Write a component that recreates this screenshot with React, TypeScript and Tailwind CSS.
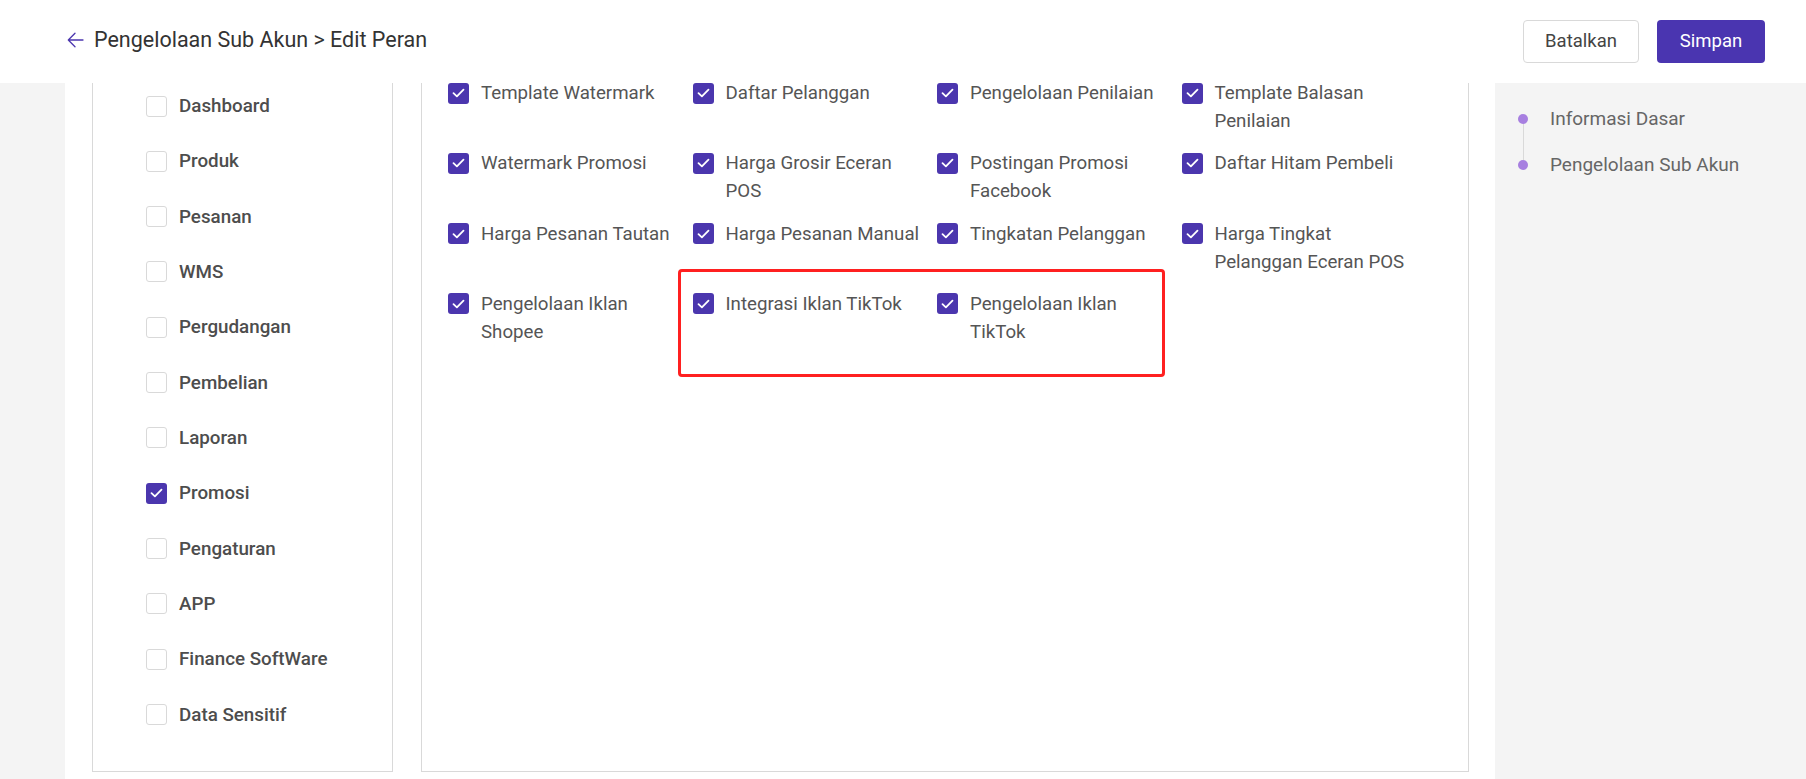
import React from 'react';

const leftItems: { label: string; checked: boolean }[] = [
  { label: 'Dashboard', checked: false },
  { label: 'Produk', checked: false },
  { label: 'Pesanan', checked: false },
  { label: 'WMS', checked: false },
  { label: 'Pergudangan', checked: false },
  { label: 'Pembelian', checked: false },
  { label: 'Laporan', checked: false },
  { label: 'Promosi', checked: true },
  { label: 'Pengaturan', checked: false },
  { label: 'APP', checked: false },
  { label: 'Finance SoftWare', checked: false },
  { label: 'Data Sensitif', checked: false },
];

const permissions = [
  'Template Watermark',
  'Daftar Pelanggan',
  'Pengelolaan Penilaian',
  'Template Balasan Penilaian',
  'Watermark Promosi',
  'Harga Grosir Eceran POS',
  'Postingan Promosi Facebook',
  'Daftar Hitam Pembeli',
  'Harga Pesanan Tautan',
  'Harga Pesanan Manual',
  'Tingkatan Pelanggan',
  'Harga Tingkat Pelanggan Eceran POS',
  'Pengelolaan Iklan Shopee',
  'Integrasi Iklan TikTok',
  'Pengelolaan Iklan TikTok',
];

const Checkbox: React.FC<{ checked: boolean }> = ({ checked }) =>
  checked ? (
    <span className="flex h-[21px] w-[21px] shrink-0 items-center justify-center rounded-[3px] bg-[#4b36ae]">
      <svg width="13" height="10" viewBox="0 0 13 10" fill="none">
        <path d="M1.5 5.2 L4.9 8.4 L11.5 1.6" stroke="white" strokeWidth="1.8" strokeLinecap="round" strokeLinejoin="round" />
      </svg>
    </span>
  ) : (
    <span className="block h-[21px] w-[21px] shrink-0 rounded-[3px] border border-[#d9d9d9] bg-white" />
  );

export default function App() {
  return (
    <div className="flex h-[779px] w-full flex-col overflow-hidden bg-white font-['Roboto',sans-serif]">
      {/* header */}
      <div className="flex h-[83px] shrink-0 items-center justify-between bg-white pl-[67px] pr-[41px]">
        <div className="flex items-center gap-[10px] pb-[3px]">
          <svg width="17" height="16" viewBox="0 0 17 16" fill="none">
            <path d="M16 8H1.5 M8 1.2 L1.3 8 L8 14.8" stroke="#4b36ae" strokeWidth="1.3" strokeLinecap="round" strokeLinejoin="round" />
          </svg>
          <span className="text-[21.5px] text-[#333]">Pengelolaan Sub Akun &gt; Edit Peran</span>
        </div>
        <div className="flex items-center gap-[18px]">
          <button className="h-[43px] w-[116px] rounded-[4px] border border-[#d9d9d9] bg-white text-[18.5px] text-[#444]">
            Batalkan
          </button>
          <button className="h-[43px] w-[108px] rounded-[4px] bg-[#4a35b0] text-[18.5px] text-white">
            Simpan
          </button>
        </div>
      </div>

      <div className="flex min-h-0 flex-1">
        <div className="w-[65px] shrink-0 bg-[#f4f4f4]" />

        {/* main */}
        <div className="flex min-w-0 flex-1 gap-[28px] bg-white pb-[7px] pl-[27px]">
          {/* left panel */}
          <div className="w-[301px] shrink-0 border-x border-b border-[#d9d9d9] pl-[53px] pt-[9px]">
            <div className="flex flex-col gap-[27.33px]">
              {leftItems.map((it) => (
                <div key={it.label} className="flex h-[28px] items-center gap-[12px]">
                  <Checkbox checked={it.checked} />
                  <span className="text-[18.8px] font-medium text-[#4d4d4d]">{it.label}</span>
                </div>
              ))}
            </div>
          </div>

          {/* permissions panel */}
          <div className="relative w-[1048px] shrink-0 border-x border-b border-[#d9d9d9] pl-[26px]">
            <div className="mt-[-4px] grid grid-cols-[repeat(4,244.5px)] gap-y-[14.3px]">
              {permissions.map((p) => (
                <div key={p} className="flex items-start gap-[12px]">
                  <span className="mt-[3.5px]">
                    <Checkbox checked />
                  </span>
                  <span className="w-[198px] text-[18.7px] leading-[28px] text-[#555]">{p}</span>
                </div>
              ))}
            </div>
            <div className="absolute left-[256px] top-[186px] h-[108px] w-[487px] rounded-[4px] border-[3px] border-[#ff2020]" />
          </div>
        </div>

        {/* right nav */}
        <div className="w-[311px] shrink-0 bg-[#f4f4f4] pl-[23px] pt-[22px]">
          <div className="flex gap-[22px]">
            <div className="mt-[9px] flex w-[10px] flex-col items-center">
              <span className="h-[10px] w-[10px] rounded-full bg-[#a77fe0]" />
              <span className="h-[36px] w-px bg-[#d9d9d9]" />
              <span className="h-[10px] w-[10px] rounded-full bg-[#a77fe0]" />
            </div>
            <div className="flex flex-col gap-[18px] text-[19px] leading-[28px] text-[#666]">
              <span>Informasi Dasar</span>
              <span>Pengelolaan Sub Akun</span>
            </div>
          </div>
        </div>
      </div>
    </div>
  );
}
